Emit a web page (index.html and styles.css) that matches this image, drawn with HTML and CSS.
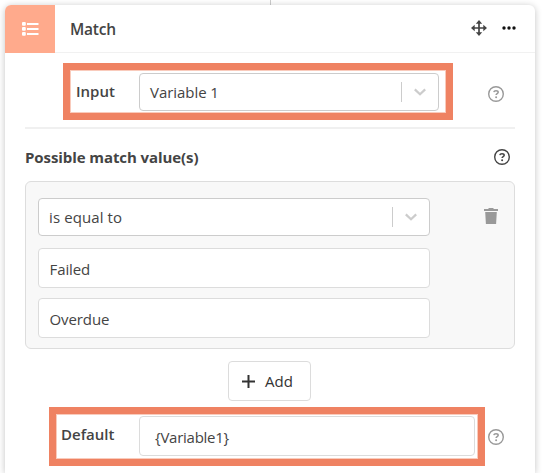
FILE: index.html
```html
<!DOCTYPE html>
<html lang="en">
<head>
<meta charset="utf-8">
<title>Match</title>
<link rel="stylesheet" href="styles.css">
</head>
<body>
<svg width="0" height="0" class="defs">
  <symbol id="help" viewBox="0 0 18 18"><circle cx="9" cy="9" r="7.3" fill="none" stroke="currentColor" stroke-width="1.4"/><path d="M6.800 7.200Q7.100 5.700 9 5.700q2.200 0 2.200 1.600c0 1.300-2.100 1.300-2.100 2.700" fill="none" stroke="currentColor" stroke-width="1.500"/><circle cx="9.100" cy="12.200" r="1" fill="currentColor"/></symbol>
  <symbol id="chevron" viewBox="0 0 14 10"><path d="M1.800 2.400 7 7.300l5.200-4.900" fill="none" stroke="currentColor" stroke-width="2.200"/></symbol>
</svg>
<div class="connector"></div>
<main class="card">
  <header class="head">
    <div class="badge">
      <svg width="18" height="16" viewBox="0 0 18 16" fill="#fff"><rect x="1" y="1" width="3.800" height="3.800" rx="1"/><rect x="1" y="6" width="3.800" height="3.800" rx="1"/><rect x="1" y="11" width="3.800" height="3.800" rx="1"/><rect x="6" y="2" width="11.500" height="2"/><rect x="6" y="7" width="11.500" height="2"/><rect x="6" y="12" width="11.500" height="2"/></svg>
    </div>
    <h1 class="title">Match</h1>
    <svg class="move" width="16" height="16" viewBox="0 0 16 16"><path d="M8 2v12M2 8h12" stroke="#444" stroke-width="1.700"/><path d="M8 0l3.200 3.700H4.800zM8 16l3.200-3.700H4.800zM0 8l3.700-3.200v6.400zM16 8l-3.700-3.200v6.400z" fill="#444"/></svg>
    <svg class="more" width="14" height="4" viewBox="0 0 14 4"><circle cx="2" cy="2" r="1.700"/><circle cx="7" cy="2" r="1.700"/><circle cx="12" cy="2" r="1.700"/></svg>
  </header>
  <section class="row row-input">
    <div class="mark mark-input">
      <label class="label">Input</label>
      <div class="select"><span class="value">Variable 1</span><i class="sep"></i><svg class="chev" width="14" height="10"><use href="#chevron"/></svg></div>
    </div>
    <svg class="help" width="18" height="18"><use href="#help"/></svg>
  </section>
  <div class="rule"></div>
  <div class="subhead"><h2>Possible match value(s)</h2><svg class="help dark" width="18" height="18"><use href="#help"/></svg></div>
  <section class="panel">
    <div class="fields">
      <div class="select"><span class="value wide">is equal to</span><i class="sep"></i><svg class="chev" width="14" height="10"><use href="#chevron"/></svg></div>
      <div class="field">Failed</div>
      <div class="field second">Overdue</div>
    </div>
    <svg class="trash" width="14" height="16" viewBox="0 0 14 16" fill="#999"><path d="M0 1h4l1-1h4l1 1h4v2H0zM1.200 4h11.600l-.7 12H1.900z"/></svg>
  </section>
  <button class="add"><svg width="13" height="13" viewBox="0 0 13 13"><path d="M6.500 0v13M0 6.500h13" stroke="#333" stroke-width="2"/></svg><span>Add</span></button>
  <section class="row row-default">
    <div class="mark mark-default">
      <label class="label">Default</label>
      <div class="field">{Variable1}</div>
    </div>
    <svg class="help" width="18" height="18"><use href="#help"/></svg>
  </section>
</main>
</body>
</html>
```
FILE: styles.css
```css
* { box-sizing: border-box; }
body { margin: 0; height: 473px; overflow: hidden; background: #fff; color: #444; font: 15px/20px "Open Sans", "Noto Sans", sans-serif; }
svg { display: block; flex: none; }
.defs { position: absolute; }
.connector { width: 1px; height: 5px; margin-left: 270px; background: #ccc; }
.card { width: 530px; height: 468px; margin-left: 5px; background: #fff; border-radius: 6px 6px 0 0; box-shadow: 0 1px 7px rgba(0,0,0,.24); }
.head { height: 48px; display: flex; align-items: center; border-bottom: 1px solid #f1f1f1; }
.badge { width: 50px; height: 48px; padding-right: 1px; display: flex; align-items: center; justify-content: center; background: #ffaa8c; border-radius: 6px 0 0 0; }
.title { flex: 1; margin: 1px 0 0 15px; font-size: 15.500px; line-height: 20px; font-weight: 600; letter-spacing: -.2px; }
.move { margin-bottom: 1px; }
.more { margin: 0 19px 1px 15px; fill: #111; }
.row { display: flex; }
.row-input { padding: 10px 0 0 58px; }
.mark { display: flex; border: 7px solid #ef8262; box-shadow: inset 0 0 0 1px #f9cbbc; }
.mark-input { width: 390px; height: 57px; padding: 3px 7px 2px 0; }
.label { font-weight: 600; white-space: nowrap; }
.mark-input .label { width: 69px; padding: 8px 0 0 6px; }
.select { flex: 1; height: 38px; display: flex; align-items: center; border: 1px solid #ccc; border-radius: 4px; background: #fff; }
.value { white-space: nowrap; margin-left: 10px; letter-spacing: -.05px; }
.value.wide { letter-spacing: .1px; }
.sep { width: 1px; height: 20px; margin-left: auto; background: #ccc; }
.chev { color: #ccc; margin: 0 11px; }
.help { color: #999; }
.row-input .help { margin: 22px 0 0 34px; }
.rule { width: 490px; height: 2px; margin: 7px 0 0 20px; background: #f0f0f0; }
.subhead { height: 52px; padding: 0 24px 4px 20px; display: flex; align-items: center; justify-content: space-between; }
.subhead h2 { margin: 7px 0 0; font-size: 15px; line-height: 20px; font-weight: 700; letter-spacing: -.08px; }
.help.dark { color: #444; margin-top: 8px; }
.panel { width: 490px; height: 168px; margin-left: 20px; padding: 16px 16px 10px 12px; display: flex; justify-content: space-between; border: 1px solid #ddd; border-radius: 6px; background: #f8f8f8; }
.fields { width: 392px; }
.field { height: 40px; display: flex; align-items: center; padding: 2px 11px 0 10.500px; border: 1px solid #dcdcdc; border-radius: 4px; background: #fff; white-space: nowrap; letter-spacing: -.1px; }
.fields .field { margin-top: 12px; }
.fields .second { margin-top: 10px; }
.trash { margin-top: 10px; }
.add { width: 83px; height: 40px; margin: 12px 0 0 223px; padding: 0 0 0 13px; display: flex; align-items: center; gap: 10px; font: inherit; color: #333; background: #fff; border: 1px solid #dcdcdc; border-radius: 4px; }
.row-default { padding: 6px 0 0 44px; }
.mark-default { width: 436px; height: 59px; padding: 2px 3px 3px 0; }
.mark-default .label { width: 83px; padding: 8px 0 0 5px; }
.mark-default .field { flex: 1; padding-left: 15px; letter-spacing: -.25px; }
.row-default .help { margin: 21px 0 0 2px; }
```
